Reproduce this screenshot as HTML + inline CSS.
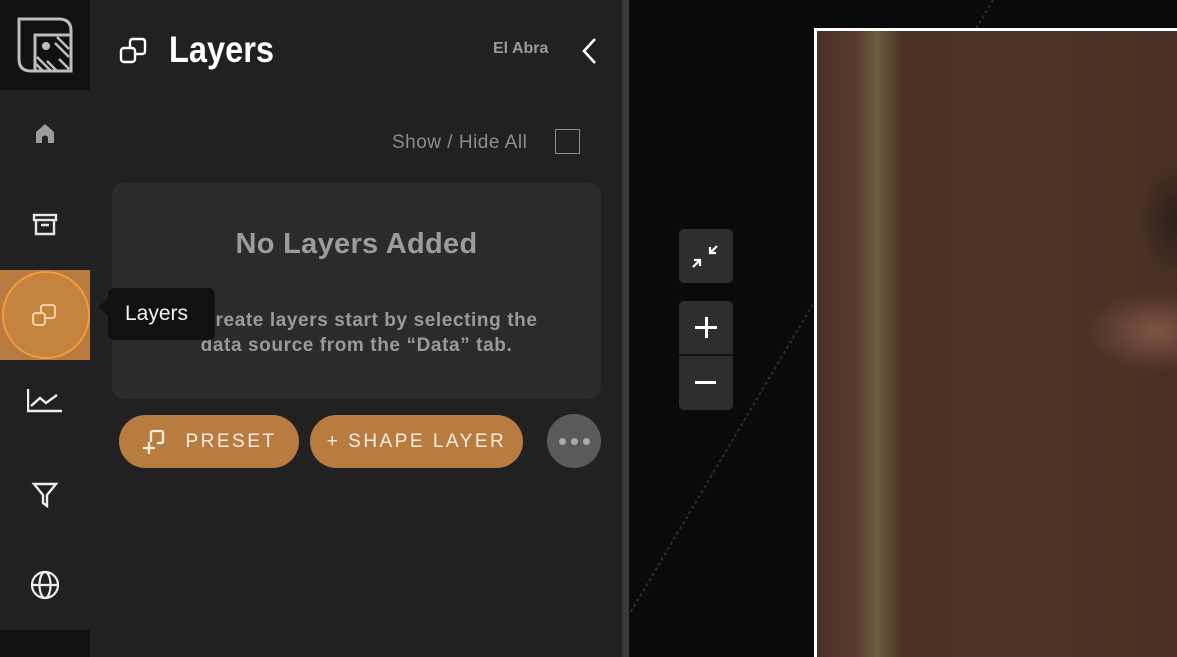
<!DOCTYPE html>
<html><head><style>
*{margin:0;padding:0;box-sizing:border-box}
html,body{width:1177px;height:657px;overflow:hidden}
body{background:#0a0a0a;font-family:"Liberation Sans",sans-serif;position:relative}
.abs{position:absolute}
#side{left:0;top:0;width:90px;height:657px;background:#222121}
#logo{left:0;top:0;width:90px;height:90px;background:#111}
#panel{left:90px;top:0;width:532px;height:657px;background:#222121}
#div{left:622px;top:0;width:7px;height:657px;background:#3a3a3a}
.ic{position:absolute;left:27px;width:36px;height:36px}
.btn{position:absolute;top:415px;height:53px;border-radius:27px;background:#b87c40;color:#fbeee0;font-size:19px;letter-spacing:2.5px;display:flex;align-items:center;justify-content:center}
.mb{position:absolute;left:679px;width:54px;background:#2e2e2e;border-radius:5px}
</style></head><body>
<div class="abs" id="side"></div>
<div class="abs" id="logo">
<svg class="abs" style="left:16px;top:16px" width="58" height="58" viewBox="0 0 58 58" fill="none" stroke="#bdbdbd" stroke-width="3">
<path d="M3 3H43Q55 3 55 15V55H15Q3 55 3 43Z"/>
<rect x="19" y="19" width="36" height="36"/>
<circle cx="30" cy="30" r="4" fill="#bdbdbd" stroke="none"/>
<path d="M41 21L53 33M39 27L53 41M19 47l8 8M21 41l14 14M31 45l10 10M43 43l10 10" stroke-width="2.5"/>
</svg></div>
<svg class="ic" style="top:115px" viewBox="0 0 36 36"><path d="M18 9L9 17V28H15V22Q18 19 21 22V28H27V17Z" fill="#9c9c9c"/></svg>
<svg class="ic" style="top:206px" viewBox="0 0 36 36" fill="none" stroke="#e6e6e6" stroke-width="2.4"><rect x="7" y="9" width="22" height="5"/><path d="M9 14V28H27V14M14 19H22"/></svg>
<div class="abs" style="left:0;top:270px;width:90px;height:90px;background:#b87c40"></div>
<div class="abs" style="left:2px;top:271px;width:88px;height:88px;border-radius:50%;border:2px solid #f59a3c;background:#c4843f"></div>
<svg class="abs" style="left:31px;top:301px" width="28" height="28" viewBox="0 0 28 28" fill="none" stroke="#f7d2a8" stroke-width="2"><rect x="2" y="12" width="12" height="12" rx="3"/><path d="M10 12V7Q10 4 13 4H21Q24 4 24 7V14Q24 17 21 17H14"/></svg>
<svg class="ic" style="top:386px" viewBox="0 0 36 36" fill="none" stroke="#eee" stroke-width="2.4"><path d="M1 3V25H35M4 20L13 12L19 17L30 9"/></svg>
<svg class="ic" style="top:476px" viewBox="0 0 36 36" fill="none" stroke="#eee" stroke-width="2.4"><path d="M7 8H29L20 19V30L16 27V19Z"/></svg>
<svg class="ic" style="top:567px" viewBox="0 0 36 36" fill="none" stroke="#eee" stroke-width="2.2"><circle cx="18" cy="18" r="13"/><ellipse cx="18" cy="18" rx="5.5" ry="13"/><path d="M5 18H31"/></svg>
<div class="abs" style="left:0;top:630px;width:90px;height:27px;background:#111"></div>
<div class="abs" id="panel"></div>
<div class="abs" id="div"></div>
<svg class="abs" style="left:119px;top:36px" width="30" height="30" viewBox="0 0 30 30" fill="none" stroke="#fff" stroke-width="2.4"><rect x="2" y="12" width="14" height="14" rx="3"/><path d="M11 12V6Q11 3 14 3H23Q26 3 26 6V15Q26 18 23 18H16"/></svg>
<div class="abs" style="left:169px;top:29px;font-size:37px;font-weight:bold;color:#fff;transform:scaleX(.88);transform-origin:left">Layers</div>
<div class="abs" style="left:493px;top:40px;font-size:16px;font-weight:bold;color:#9a9a9a">El Abra</div>
<svg class="abs" style="left:578px;top:36px" width="22" height="30" viewBox="0 0 22 30" fill="none" stroke="#fff" stroke-width="2.6"><path d="M17 3L6 15L17 27"/></svg>
<div class="abs" style="left:392px;top:132px;font-size:19px;color:#8d8d8d;letter-spacing:.5px">Show / Hide All</div>
<div class="abs" style="left:555px;top:129px;width:25px;height:25px;border:1.5px solid #8d8d8d"></div>
<div class="abs" style="left:112px;top:183px;width:489px;height:216px;background:#2c2b2b;border-radius:12px"></div>
<div class="abs" style="left:112px;top:228px;width:489px;text-align:center;font-size:29px;font-weight:bold;color:#9c9c9c;letter-spacing:.3px">No Layers Added</div>
<div class="abs" style="left:112px;top:308px;width:489px;text-align:center;font-size:19px;font-weight:bold;color:#9a9a9a;line-height:25px;letter-spacing:.6px">To create layers start by selecting the<br>data source from the “Data” tab.</div>
<div class="abs" style="left:98px;top:298px;width:0;height:0;border-top:9px solid transparent;border-bottom:9px solid transparent;border-right:11px solid #111"></div>
<div class="abs" style="left:108px;top:288px;width:107px;height:52px;background:#111;border-radius:6px;color:#f2f2f2;font-size:21px;padding:14px 0 0 17px">Layers</div>
<div class="btn" style="left:119px;width:180px"><svg width="30" height="30" viewBox="0 0 30 30" fill="none" stroke="#fbeee0" stroke-width="2.3" style="margin-right:14px"><path d="M10 15V6Q10 4 12 4H20Q22 4 22 6V14Q22 16 20 16H16M2 21H14M8 15V27"/></svg>PRESET</div>
<div class="btn" style="left:310px;width:213px">+ SHAPE LAYER</div>
<div class="abs" style="left:547px;top:414px;width:54px;height:54px;border-radius:50%;background:#5a5a5a;display:flex;align-items:center;justify-content:center;gap:5px"><i style="width:7px;height:7px;border-radius:50%;background:#aaa"></i><i style="width:7px;height:7px;border-radius:50%;background:#aaa"></i><i style="width:7px;height:7px;border-radius:50%;background:#aaa"></i></div>
<svg class="abs" style="left:629px;top:0" width="370" height="620"><line x1="364" y1="0" x2="0" y2="615" stroke="#2e2e2e" stroke-width="2" stroke-dasharray="3 3"/></svg>
<div class="abs" style="left:814px;top:28px;width:380px;height:629px;border:3px solid #fff;border-bottom:none;background:
radial-gradient(ellipse 40px 60px at 360px 190px,#2c2018,transparent),
radial-gradient(ellipse 70px 40px at 340px 300px,#7e5546,transparent),
linear-gradient(90deg,#4a3026 0,#5a3c2c 40px,#6e5c40 60px,#4b3224 85px,#4f3527 200px,#4a3024 360px),#4e3426"></div>
<div class="mb" style="top:229px;height:54px"><svg width="54" height="54" viewBox="0 0 54 54" fill="none" stroke="#fff" stroke-width="2.2"><path d="M38 17L31 24M31 18V24H37M14 38L21 31M15 31H21V37"/></svg></div>
<div class="mb" style="top:301px;height:109px"><div style="position:absolute;top:53px;left:0;width:54px;height:2px;background:#111"></div>
<div style="position:absolute;left:16px;top:25px;width:22px;height:3px;background:#fff"></div><div style="position:absolute;left:25.5px;top:16px;width:3px;height:21px;background:#fff"></div>
<div style="position:absolute;left:16px;top:80px;width:21px;height:2.5px;background:#fff"></div></div>
</body></html>
